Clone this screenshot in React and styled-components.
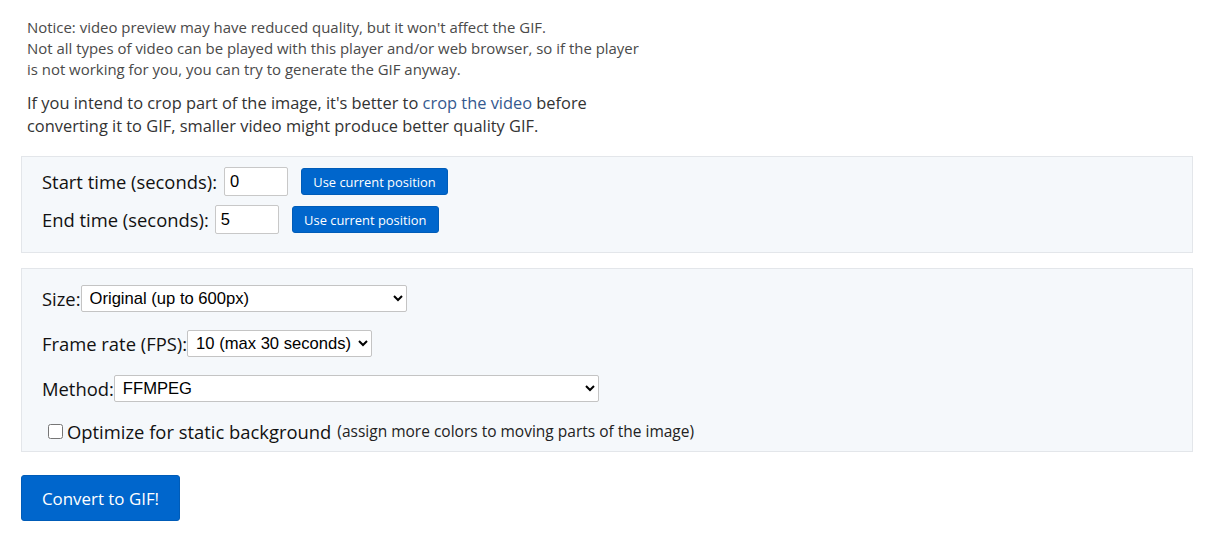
import React, { useState } from 'react';
import styled, { createGlobalStyle } from 'styled-components';

const GlobalStyle = createGlobalStyle`
    body {
        margin: 0;
        background: #fff;
        font-family: "Open Sans", "Noto Sans", Arial, sans-serif;
        color: #222;
    }
`;

const Pagina = styled.div`
    width: 1172px;
    padding: 17px 0 0 21px;
`;

const Aviso = styled.p`
    margin: 0;
    padding-left: 6px;
    font-size: 14.95px;
    line-height: 21px;
    color: #4a4a4a;
    white-space: nowrap;
`;

const Consejo = styled.p`
    margin: 11px 0 0 0;
    padding-left: 6px;
    font-size: 16.4px;
    line-height: 23px;
    color: #333;
    white-space: nowrap;
`;

const Enlace = styled.a`
    color: #35598f;
    text-decoration: none;
`;

const Panel = styled.div`
    margin-top: ${(props) => props.$top}px;
    background: #f5f8fb;
    border: 1px solid #e3e6ea;
    padding: ${(props) => props.$padding};
`;

const Fila = styled.div`
    display: flex;
    align-items: center;
    height: ${(props) => props.$height || 29}px;
    margin-bottom: ${(props) => props.$bottom || 0}px;
`;

const Etiqueta = styled.label`
    font-size: 18.4px;
    color: #111;
    margin-right: ${(props) => props.$gap || 0}px;
    white-space: nowrap;
`;

const Campo = styled.input`
    box-sizing: border-box;
    width: 64px;
    height: 29px;
    margin: 0 13px 0 0;
    padding: 0 5px;
    border: 1px solid #c8c8c8;
    border-radius: 2px;
    background: #fff;
    font-family: "Liberation Sans", Arial, sans-serif;
    font-size: 16.5px;
    color: #000;
    outline: none;
`;

const BotonChico = styled.button`
    box-sizing: border-box;
    width: 147px;
    height: 27px;
    padding: 0;
    border: 1px solid #005cb8;
    border-radius: 3px;
    background: #0066cc;
    color: #fff;
    font-family: "Open Sans", "Noto Sans", Arial, sans-serif;
    font-size: 12.9px;
    cursor: pointer;
`;

const Selector = styled.select`
    box-sizing: border-box;
    width: ${(props) => (props.$width ? props.$width + 'px' : 'auto')};
    height: 27px;
    padding: 0 4px;
    border: 1px solid #c4c4c4;
    border-radius: 2px;
    background: #fff;
    font-family: "Liberation Sans", Arial, sans-serif;
    font-size: 16.6px;
    color: #000;
    outline: none;
`;

const Casilla = styled.input`
    width: 15px;
    height: 15px;
    margin: 0 4px 0 6px;
`;

const Nota = styled.span`
    font-size: 15.5px;
    color: #222;
    margin-left: 6px;
    white-space: nowrap;
`;

const BotonGrande = styled.button`
    margin-top: 23px;
    box-sizing: border-box;
    width: 159px;
    height: 46px;
    border: 1px solid #005cb8;
    border-radius: 3px;
    background: #0066cc;
    color: #fff;
    font-family: "Open Sans", "Noto Sans", Arial, sans-serif;
    font-size: 16.9px;
    cursor: pointer;
`;

const App = () => {
    const [inicio, cambiarInicio] = useState('0');
    const [fin, cambiarFin] = useState('5');

    return (
        <>
            <GlobalStyle />
            <Pagina>
                <Aviso>
                    Notice: video preview may have reduced quality, but it won't affect the GIF.<br />
                    Not all types of video can be played with this player and/or web browser, so if the player<br />
                    is not working for you, you can try to generate the GIF anyway.
                </Aviso>
                <Consejo>
                    If you intend to crop part of the image, it's better to <Enlace href="#">crop the video</Enlace> before<br />
                    converting it to GIF, smaller video might produce better quality GIF.
                </Consejo>

                <Panel $top={19} $padding="10px 20px 18px 20px">
                    <Fila $bottom={9}>
                        <Etiqueta $gap={7}>Start time (seconds):</Etiqueta>
                        <Campo value={inicio} onChange={(e) => cambiarInicio(e.target.value)} />
                        <BotonChico>Use current position</BotonChico>
                    </Fila>
                    <Fila>
                        <Etiqueta $gap={6}>End time (seconds):</Etiqueta>
                        <Campo value={fin} onChange={(e) => cambiarFin(e.target.value)} />
                        <BotonChico>Use current position</BotonChico>
                    </Fila>
                </Panel>

                <Panel $top={15} $padding="16px 20px 8px 20px">
                    <Fila $height={27} $bottom={18}>
                        <Etiqueta>Size:</Etiqueta>
                        <Selector $width={326} defaultValue="orig">
                            <option value="orig">Original (up to 600px)</option>
                            <option value="480">480xAUTO</option>
                            <option value="320">320xAUTO</option>
                        </Selector>
                    </Fila>
                    <Fila $height={27} $bottom={18}>
                        <Etiqueta>Frame rate (FPS):</Etiqueta>
                        <Selector defaultValue="10">
                            <option value="10">10 (max 30 seconds)</option>
                            <option value="5">5 (max 60 seconds)</option>
                        </Selector>
                    </Fila>
                    <Fila $height={27} $bottom={17}>
                        <Etiqueta>Method:</Etiqueta>
                        <Selector $width={485} defaultValue="ffmpeg">
                            <option value="ffmpeg">FFMPEG</option>
                            <option value="im">ImageMagick</option>
                        </Selector>
                    </Fila>
                    <Fila $height={24}>
                        <Casilla type="checkbox" id="estatico" />
                        <Etiqueta htmlFor="estatico">Optimize for static background</Etiqueta>
                        <Nota>(assign more colors to moving parts of the image)</Nota>
                    </Fila>
                </Panel>

                <BotonGrande>Convert to GIF!</BotonGrande>
            </Pagina>
        </>
    );
};

export default App;
